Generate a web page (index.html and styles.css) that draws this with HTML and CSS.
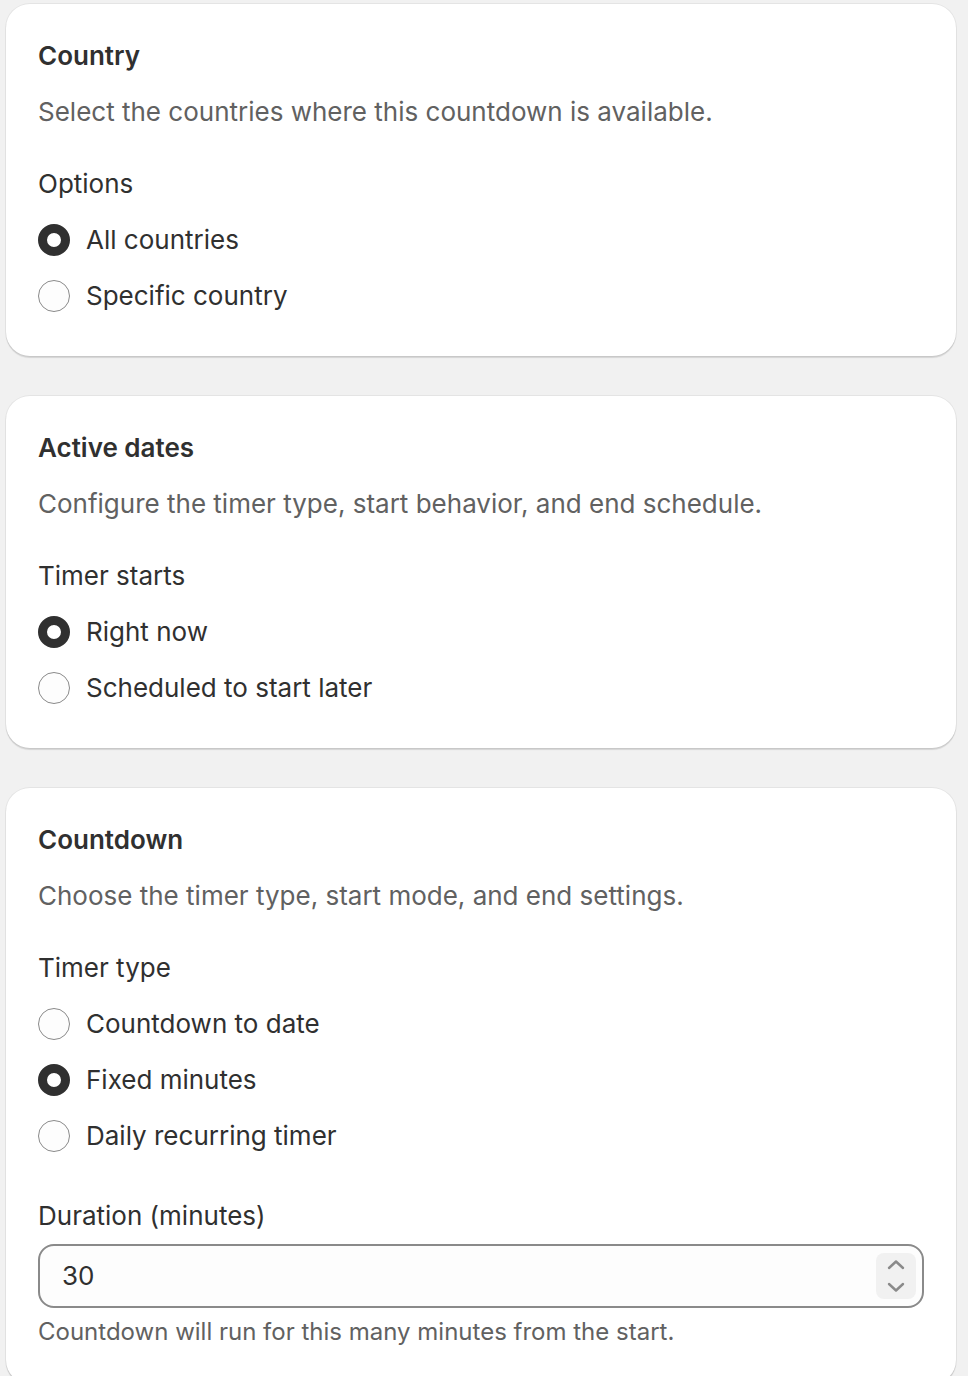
FILE: index.html
```html
<!DOCTYPE html>
<html lang="en">
<head>
  <meta charset="UTF-8">
  <meta name="viewport" content="width=device-width, initial-scale=1.0">
  <title>Countdown settings</title>
  <link rel="stylesheet" href="styles.css">
</head>
<body>
  <div class="page">
    <div class="card">
      <h2>Country</h2>
      <p class="desc">Select the countries where this countdown is available.</p>
      <div class="field">
        <div class="label">Options</div>
        <div class="choices">
          <label class="choice"><span class="radio checked"></span>All countries</label>
          <label class="choice"><span class="radio"></span>Specific country</label>
        </div>
      </div>
    </div>

    <div class="card">
      <h2>Active dates</h2>
      <p class="desc">Configure the timer type, start behavior, and end schedule.</p>
      <div class="field">
        <div class="label">Timer starts</div>
        <div class="choices">
          <label class="choice"><span class="radio checked"></span>Right now</label>
          <label class="choice"><span class="radio"></span>Scheduled to start later</label>
        </div>
      </div>
    </div>

    <div class="card">
      <h2>Countdown</h2>
      <p class="desc">Choose the timer type, start mode, and end settings.</p>
      <div class="field">
        <div class="label">Timer type</div>
        <div class="choices">
          <label class="choice"><span class="radio"></span>Countdown to date</label>
          <label class="choice"><span class="radio checked"></span>Fixed minutes</label>
          <label class="choice"><span class="radio"></span>Daily recurring timer</label>
        </div>
      </div>
      <div class="field">
        <div class="label">Duration (minutes)</div>
        <div class="input">
          <span class="value">30</span>
          <span class="spinner">
            <svg width="20" height="12" viewBox="0 0 20 12"><path d="M3 9 L10 2.5 L17 9" fill="none" stroke="#8a8a8a" stroke-width="2.4" stroke-linecap="round" stroke-linejoin="round"/></svg>
            <svg width="20" height="12" viewBox="0 0 20 12"><path d="M3 3 L10 9.5 L17 3" fill="none" stroke="#8a8a8a" stroke-width="2.4" stroke-linecap="round" stroke-linejoin="round"/></svg>
          </span>
        </div>
        <div class="help">Countdown will run for this many minutes from the start.</div>
      </div>
    </div>
  </div>
</body>
</html>
```
FILE: styles.css
```css
* { box-sizing: border-box; }
body { margin: 0; background: #f1f1f1; font-family: Inter, "Noto Sans", sans-serif; color: #303030; font-size: 26px; line-height: 40px; }
.page { padding: 4px 12px 0 6px; display: flex; flex-direction: column; gap: 40px; }
.card { background: #fff; border-radius: 24px; padding: 32px; box-shadow: 0 2px 1px rgba(0,0,0,0.12), 0 0 0 1px rgba(0,0,0,0.05); display: flex; flex-direction: column; gap: 32px; }
h2 { margin: 0; font-size: 26px; font-weight: 600; line-height: 40px; }
.card h2 + .desc { margin-top: -16px; }
.desc { margin: 0; color: #616161; }
.field { display: flex; flex-direction: column; }
.label { margin-bottom: 16px; }
.choices { display: flex; flex-direction: column; gap: 16px; padding-bottom: 8px; }
.choice { display: flex; align-items: center; gap: 16px; height: 40px; }
.radio { width: 32px; height: 32px; border-radius: 50%; border: 1.5px solid #8a8a8a; background: #fdfdfd; flex: none; }
.radio.checked { border: 9px solid #303030; background: #fff; }
.field .label + .input { margin-top: -8px; }
.input { height: 64px; border: 2px solid #8a8a8a; border-radius: 16px; background: #fdfdfd; display: flex; align-items: center; justify-content: space-between; padding: 0 6px 0 22px; }
.spinner { width: 40px; height: 46px; border-radius: 8px; background: #f1f1f1; display: flex; flex-direction: column; align-items: center; justify-content: center; gap: 10px; }
.spinner svg { display: block; }
.help { color: #616161; margin-top: 4px; font-size: 24px; }
```
